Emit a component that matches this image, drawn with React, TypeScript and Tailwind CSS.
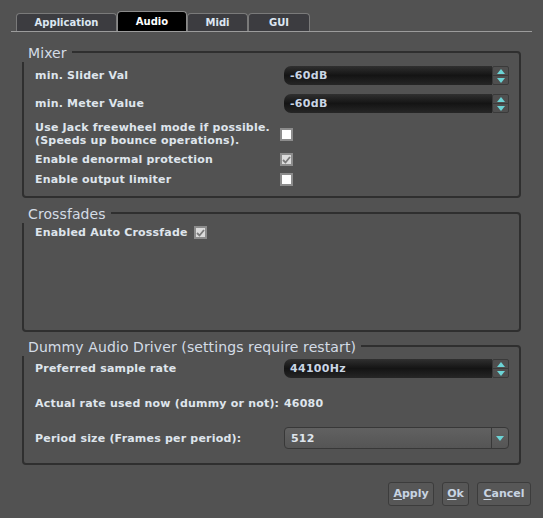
import React from 'react';

const Arrow: React.FC<{ up?: boolean }> = ({ up }) => (
  <svg width="8" height="5" viewBox="0 0 8 5">
    <polygon points={up ? '4,0 8,5 0,5' : '0,0 8,0 4,5'} fill="#6cd4d6" />
  </svg>
);

const SpinBox: React.FC<{ value: string }> = ({ value }) => (
  <div className="flex h-[19px] w-[225px] ml-[2px]">
    <div className="flex-1 flex items-center pl-[6px] rounded-l-[7px] bg-gradient-to-b from-[#303030] via-[#141414] to-[#262626] text-[11px] font-bold tracking-[0.3px] text-[#c9d5e4] leading-none">
      {value}
    </div>
    <div className="w-[17px] flex flex-col border border-[#3a3a3a] rounded-[2px] bg-[#4f4f4f]">
      <div className="flex-1 flex items-center justify-center border-b border-[#3a3a3a]">
        <Arrow up />
      </div>
      <div className="flex-1 flex items-center justify-center">
        <Arrow />
      </div>
    </div>
  </div>
);

const Check: React.FC<{ checked?: boolean }> = ({ checked }) => (
  <div
    className={`w-[13px] h-[13px] border-2 border-[#8c8c8c] flex items-center justify-center ${
      checked ? 'bg-[#dcdcdc]' : 'bg-white'
    }`}
  >
    {checked && (
      <svg width="9" height="8" viewBox="0 0 9 8">
        <path d="M1 4 L3.5 6.5 L8 1" stroke="#7a7a7a" strokeWidth="1.8" fill="none" />
      </svg>
    )}
  </div>
);

const Group: React.FC<{ title: string; className?: string; children: React.ReactNode }> = ({
  title,
  className,
  children,
}) => (
  <div className={`mx-[22px] border-2 border-[#2f2f2f] rounded-[4px] flex flex-col ${className ?? ''}`}>
    <div className="-mt-[10px] -ml-[2px] self-start bg-[#525252] pl-[6px] pr-[5px] h-[19px] flex items-center text-[14px] tracking-[0.1px] text-[#d4dce6] leading-none">
      {title}
    </div>
    {children}
  </div>
);

const label = 'text-[11px] font-bold tracking-[0.2px] text-[#dfe5ec] leading-[13px]';

const Button: React.FC<{ first: string; rest: string; className?: string }> = ({ first, rest, className }) => (
  <button
    className={`h-[24px] border border-[#3c3c3c] rounded-[3px] bg-[#575757] text-[11px] font-bold text-[#c8d4e2] flex items-center justify-center ${className ?? ''}`}
  >
    <span className="underline underline-offset-2">{first}</span>
    {rest}
  </button>
);

export default function App() {
  const tabs = ['Application', 'Audio', 'Midi', 'GUI'];
  const widths = ['w-[101px]', 'w-[70px]', 'w-[61px]', 'w-[62px]'];

  return (
    <div className="w-[543px] h-[518px] bg-[#525252] flex flex-col font-['DejaVu_Sans',sans-serif]">
      {/* tabs */}
      <div className="mx-[11px] mt-[11px] h-[21px] border-b border-[#9c9c9c] flex items-end pl-[5px]">
        {tabs.map((t, i) =>
          t === 'Audio' ? (
            <div
              key={t}
              className={`${widths[i]} h-[20px] rounded-t-[4px] border border-b-0 border-[#8a8a8a] bg-black text-white text-[10px] font-bold flex items-center justify-center`}
            >
              {t}
            </div>
          ) : (
            <div
              key={t}
              className={`${widths[i]} h-[18px] rounded-t-[4px] border border-b-0 border-[#7a7a7a] bg-[#3c3c40] text-[#dde7f2] text-[10px] font-bold flex items-center justify-center pb-[1px]`}
            >
              {t}
            </div>
          )
        )}
      </div>

      {/* Mixer */}
      <Group title="Mixer" className="mt-[19px] pb-[10px]">
        <div className="grid grid-cols-[247px_1fr] pl-[11px] pr-[12px] items-center">
          <div className={`${label} mt-[4px]`}>min. Slider Val</div>
          <div className="mt-[4px]">
            <SpinBox value="-60dB" />
          </div>
          <div className={`${label} mt-[9px]`}>min. Meter Value</div>
          <div className="mt-[9px]">
            <SpinBox value="-60dB" />
          </div>
          <div className={`${label} mt-[8px]`}>
            Use Jack freewheel mode if possible.
            <br />
            (Speeds up bounce operations).
          </div>
          <div className="mt-[8px] -ml-[2px]">
            <Check />
          </div>
          <div className={`${label} mt-[6px]`}>Enable denormal protection</div>
          <div className="mt-[6px] -ml-[2px]">
            <Check checked />
          </div>
          <div className={`${label} mt-[7px]`}>Enable output limiter</div>
          <div className="mt-[7px] -ml-[2px]">
            <Check />
          </div>
        </div>
      </Group>

      {/* Crossfades */}
      <Group title="Crossfades" className="mt-[14px] h-[120px]">
        <div className="pl-[11px] mt-[3px] flex items-center gap-[6px]">
          <span className={label}>Enabled Auto Crossfade</span>
          <Check checked />
        </div>
      </Group>

      {/* Dummy audio driver */}
      <Group title="Dummy Audio Driver (settings require restart)" className="mt-[13px] pb-[14px]">
        <div className="grid grid-cols-[247px_1fr] pl-[11px] pr-[12px] items-center">
          <div className={`${label} mt-[3px]`}>Preferred sample rate</div>
          <div className="mt-[3px]">
            <SpinBox value="44100Hz" />
          </div>
          <div className={`${label} mt-[19px]`}>Actual rate used now (dummy or not):</div>
          <div className={`${label} mt-[19px] ml-[2px]`}>46080</div>
          <div className={`${label} mt-[17px]`}>Period size (Frames per period):</div>
          <div className="mt-[17px] ml-[2px] w-[225px] h-[22px] flex border border-[#383838] rounded-[4px] bg-gradient-to-b from-[#616161] to-[#555555]">
            <div className={`${label} flex-1 flex items-center pl-[6px] text-[#d4dce6]`}>512</div>
            <div className="w-[17px] border-l border-[#383838] flex items-center justify-center">
              <Arrow />
            </div>
          </div>
        </div>
      </Group>

      {/* buttons */}
      <div className="flex justify-end gap-[8px] mt-[17px] pr-[12px]">
        <Button first="A" rest="pply" className="w-[46px]" />
        <Button first="O" rest="k" className="w-[27px]" />
        <Button first="C" rest="ancel" className="w-[54px]" />
      </div>
    </div>
  );
}
